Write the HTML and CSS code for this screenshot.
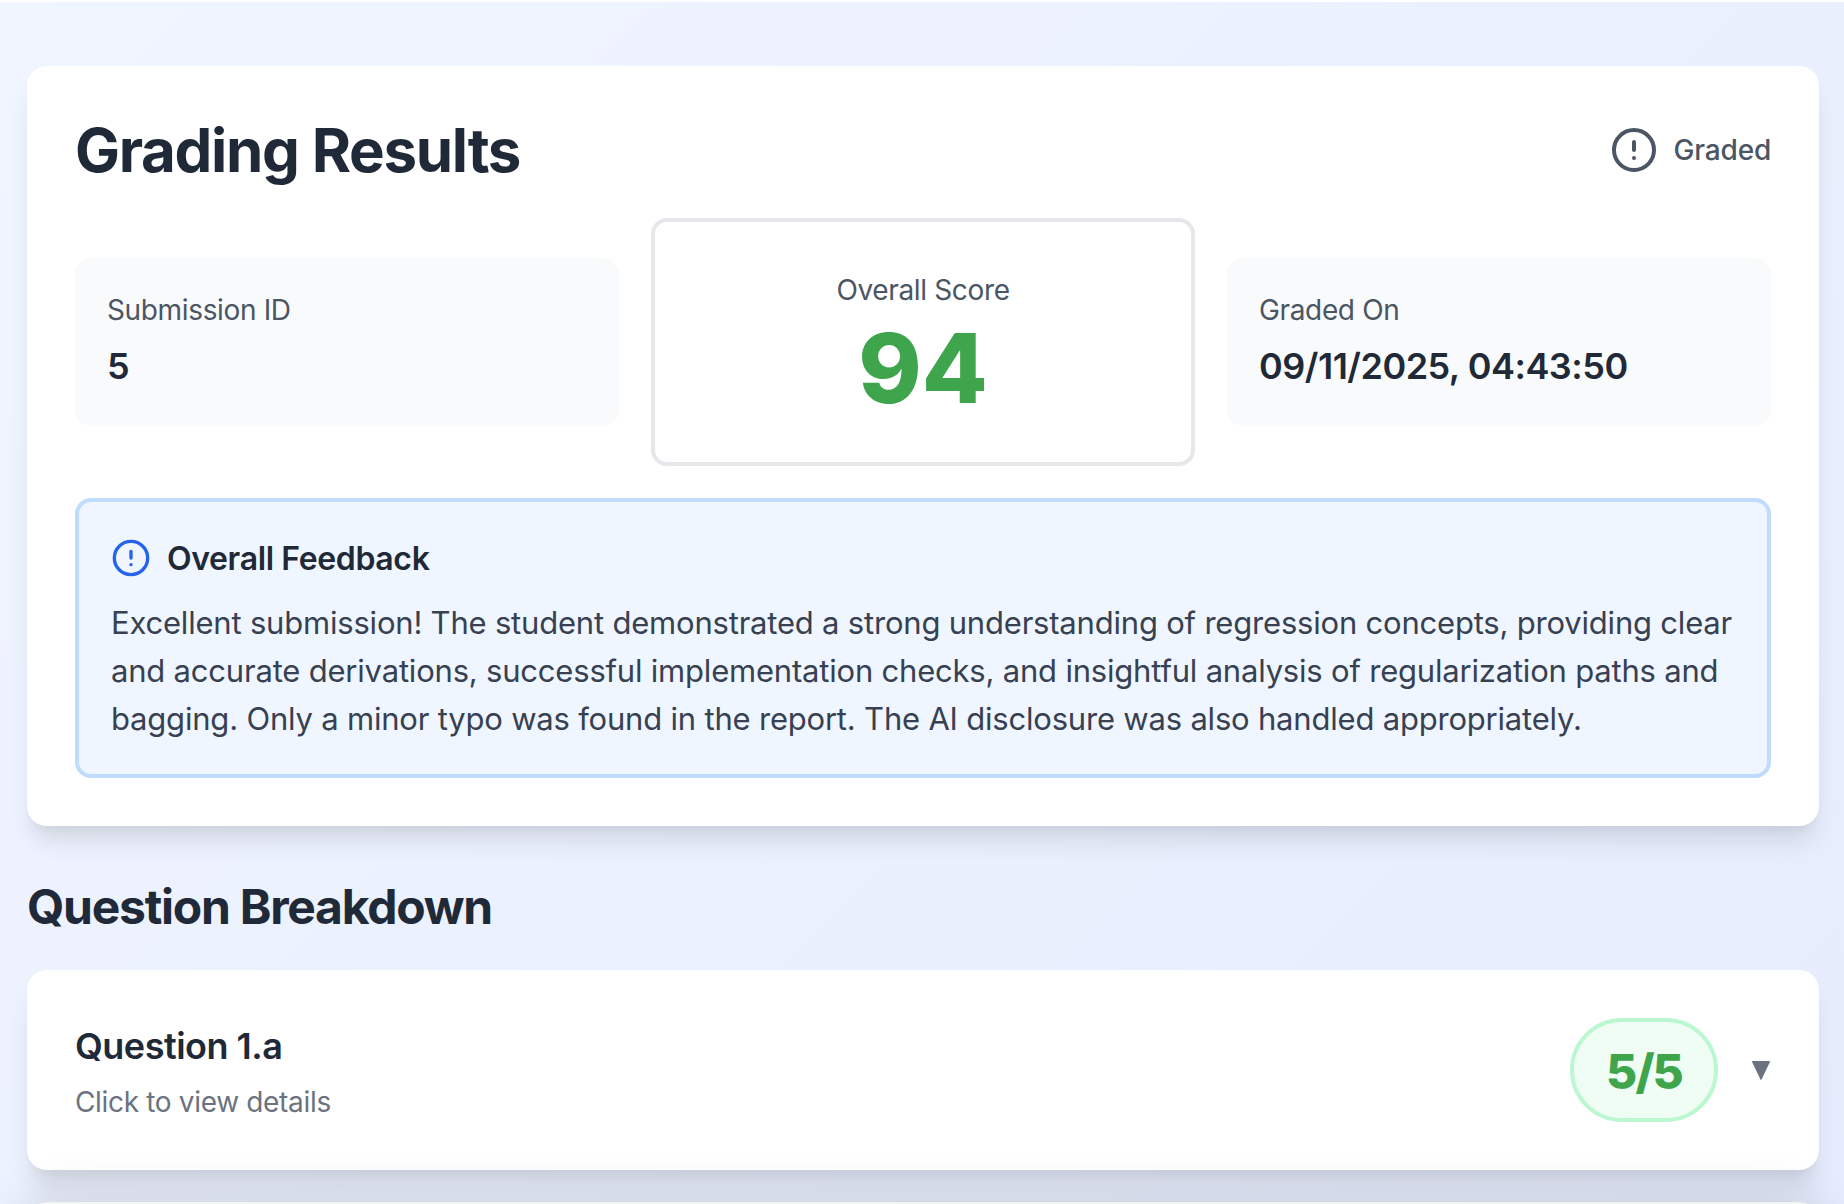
FILE: index.html
```html
<!DOCTYPE html>
<html lang="en">
<head>
<meta charset="utf-8">
<title>Grading Results</title>
<link rel="stylesheet" href="styles.css">
</head>
<body>
<main class="page">
  <section class="card results">
    <header class="results-head">
      <h1 class="title">Grading Results</h1>
      <div class="status">
        <svg class="status-icon" viewBox="0 0 24 24" fill="none" stroke="currentColor" stroke-width="2" stroke-linecap="round"><circle cx="12" cy="12" r="10"/><path d="M12 8v4"/><path d="M12 16h.01"/></svg>
        <span>Graded</span>
      </div>
    </header>
    <div class="stats">
      <div class="stat">
        <div class="stat-label">Submission ID</div>
        <div class="stat-value">5</div>
      </div>
      <div class="score">
        <div class="stat-label">Overall Score</div>
        <div class="score-value">94</div>
      </div>
      <div class="stat">
        <div class="stat-label">Graded On</div>
        <div class="stat-value">09/11/2025, 04:43:50</div>
      </div>
    </div>
    <div class="feedback">
      <div class="feedback-head">
        <svg class="feedback-icon" viewBox="0 0 24 24" fill="none" stroke="currentColor" stroke-width="2" stroke-linecap="round"><circle cx="12" cy="12" r="10"/><path d="M12 8v4"/><path d="M12 16h.01"/></svg>
        <h2 class="feedback-title">Overall Feedback</h2>
      </div>
      <p class="feedback-text">Excellent submission! The student demonstrated a strong understanding of regression concepts, providing clear and accurate derivations, successful implementation checks, and insightful analysis of regularization paths and bagging. Only a minor typo was found in the report. The AI disclosure was also handled appropriately.</p>
    </div>
  </section>
  <h2 class="breakdown">Question Breakdown</h2>
  <section class="card question">
    <div class="q-info">
      <h3 class="q-title">Question 1.a</h3>
      <div class="q-sub">Click to view details</div>
    </div>
    <div class="q-right">
      <div class="pill">5/5</div>
      <svg class="caret" viewBox="0 0 18 18"><path d="M1.5 1h15a.6.6 0 0 1 .5.9L9.6 17.4a.7.7 0 0 1-1.2 0L1 1.9a.6.6 0 0 1 .5-.9z" fill="currentColor"/></svg>
    </div>
  </section>
  <section class="card next"></section>
</main>
</body>
</html>
```
FILE: styles.css
```css
* { box-sizing: border-box; }
html, body { margin: 0; height: 100%; background: #fff; }
body { padding-top: 2px; overflow: hidden; font-family: Inter, "Liberation Sans", sans-serif; color: #1f2937; }
.page { height: 1202px; overflow: hidden; padding: 64px 25px 0 27px; background: linear-gradient(135deg, #f0f5ff 0%, #e6ecfd 100%); }
.card { background: #fff; border-radius: 20px; box-shadow: 0 20px 25px -5px rgba(0,0,0,.1), 0 10px 10px -5px rgba(0,0,0,.04); }
.results { height: 760px; padding: 48px; }
.results-head { display: flex; justify-content: space-between; align-items: center; height: 72px; margin-bottom: 32px; }
.title { margin: 0; font-size: 60px; line-height: 72px; font-weight: 700; color: #1f2937; letter-spacing: -1.3px; }
.status { display: flex; align-items: center; gap: 16px; font-size: 28px; font-weight: 500; color: #4b5563; letter-spacing: -0.2px; }
.status-icon { width: 48px; height: 48px; }
.stats { display: grid; grid-template-columns: repeat(3, 1fr); gap: 32px; align-items: center; }
.stat { height: 168px; padding: 32px; background: #f9fafb; border-radius: 16px; }
.stat-label { font-size: 28px; line-height: 40px; color: #4b5563; letter-spacing: -0.35px; }
.stat-value { margin-top: 12px; font-size: 36px; line-height: 48px; font-weight: 600; color: #1f2937; letter-spacing: -0.5px; }
.score { height: 248px; padding-top: 48px; text-align: center; background: #fff; border: 4px solid #e5e7eb; border-radius: 16px; }
.score-value { font-size: 96px; line-height: 96px; margin-top: 10px; font-weight: 800; color: #3fa54d; }
.feedback { height: 280px; margin-top: 32px; padding: 32px; background: #f0f6ff; border: 4px solid #bfdbfe; border-radius: 16px; }
.feedback-head { display: flex; align-items: center; gap: 16px; height: 48px; margin-bottom: 17px; }
.feedback-icon { width: 40px; height: 40px; color: #2563eb; }
.feedback-title { margin: 0; font-size: 32px; font-weight: 600; color: #1f2937; letter-spacing: -0.37px; }
.feedback-text { margin: 0 -10px 0 0; font-size: 31px; line-height: 48px; color: #374151; letter-spacing: -0.2px; }
.breakdown { margin: 49px 0 31px; font-size: 48px; line-height: 64px; font-weight: 700; color: #1f2937; letter-spacing: -1.25px; }
.question { display: flex; justify-content: space-between; align-items: center; height: 200px; padding: 48px; }
.q-info { padding-top: 4px; }
.q-title { margin: 0; font-size: 36px; line-height: 48px; font-weight: 600; color: #1f2937; letter-spacing: -0.5px; }
.q-sub { margin-top: 12px; font-size: 28px; line-height: 40px; color: #6b7280; letter-spacing: -0.33px; }
.q-right { display: flex; align-items: center; gap: 33px; }
.pill { width: 148px; height: 104px; padding-top: 2px; display: flex; align-items: center; justify-content: center; font-size: 48px; font-weight: 800; color: #3fa54d; background: #f0fdf4; border: 4px solid #bbf7d0; border-radius: 52px; letter-spacing: -2px; }
.caret { width: 20px; height: 20px; color: #6b7280; }
.next { height: 200px; margin-top: 32px; background: #f3f3ef; box-shadow: 0 0 50px rgba(0,0,0,.16); }
```
